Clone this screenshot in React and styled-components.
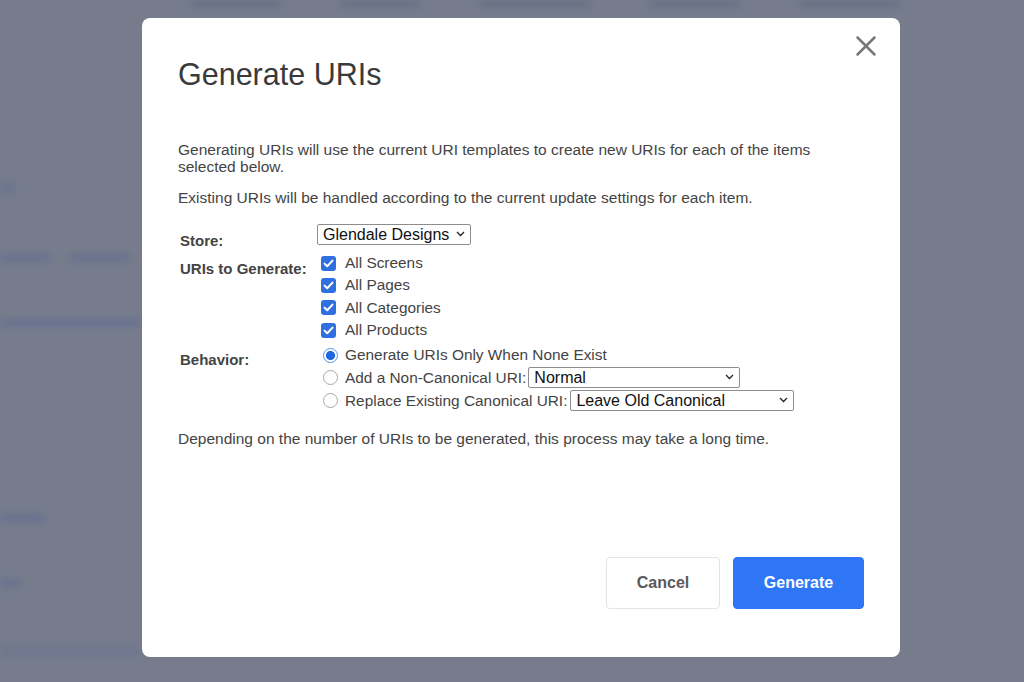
import React, { useState } from 'react';
import styled, { createGlobalStyle } from 'styled-components';

const GlobalStyle = createGlobalStyle`
  html, body {
    margin: 0;
    padding: 0;
    height: 100%;
    background: #767c8c;
    font-family: "Liberation Sans", Arial, sans-serif;
  }
  #root {
    height: 100%;
  }
`;

const Page = styled.div`
  position: relative;
  width: 100%;
  height: 100vh;
  overflow: hidden;
  background: #767c8c;
`;

const Ghost = styled.div`
  display: flex;
  flex-direction: column;
  filter: blur(3px);
`;

const GhostRow = styled.div`
  display: flex;
  gap: ${({ $gap }) => $gap || 20}px;
  margin-top: ${({ $mt }) => $mt || 0}px;
  padding-left: ${({ $pl }) => $pl || 0}px;
`;

const GhostBar = styled.span`
  display: block;
  height: 8px;
  width: ${({ $w }) => $w}px;
  border-radius: 4px;
  background: ${({ $c }) => $c || 'rgba(86, 100, 150, 0.4)'};
`;

const Overlay = styled.div`
  position: absolute;
  inset: 0;
  display: flex;
  align-items: flex-start;
  justify-content: flex-start;
  padding: 18px 0 0 142px;
`;

const Modal = styled.div`
  position: relative;
  box-sizing: border-box;
  width: 758px;
  height: 639px;
  background: #ffffff;
  border-radius: 8px;
  padding: 38px 36px 48px 36px;
  display: flex;
  flex-direction: column;
  color: #3d3d3d;
`;

const CloseButton = styled.button`
  position: absolute;
  top: 16px;
  right: 22px;
  width: 24px;
  height: 24px;
  padding: 0;
  border: none;
  background: none;
  cursor: pointer;
  display: flex;
  align-items: center;
  justify-content: center;
`;

const Title = styled.h1`
  margin: 0;
  font-size: 30.5px;
  line-height: 36px;
  font-weight: 400;
  color: #3a3a3c;
`;

const Body = styled.div`
  margin-top: 49px;
  flex: 1;
`;

const Para = styled.p`
  margin: ${({ $mt }) => $mt || 0}px 0 ${({ $mb }) => $mb ?? 14}px 0;
  max-width: 680px;
  font-size: 15.5px;
  line-height: 17px;
  color: #444;
`;

const FormGrid = styled.div`
  display: grid;
  grid-template-columns: 139px 1fr;
  margin-top: 18px;
`;

const FieldLabel = styled.div`
  padding-left: 2px;
  padding-top: ${({ $pt }) => $pt || 0}px;
  font-size: 15px;
  line-height: 17px;
  font-weight: 700;
  color: #444;
`;

const FieldValue = styled.div`
  display: flex;
  flex-direction: column;
  margin-top: ${({ $mt }) => $mt || 0}px;
`;

const OptionRow = styled.label`
  display: flex;
  align-items: center;
  height: ${({ $h }) => $h || 22.3}px;
  font-size: 15.4px;
  color: #444;
  cursor: pointer;
  white-space: nowrap;
`;

const CheckBox = styled.span`
  box-sizing: border-box;
  width: 15px;
  height: 15px;
  margin: 0 9px 0 4px;
  border-radius: 3px;
  background: ${({ $on }) => ($on ? '#2f6fe0' : '#fff')};
  border: ${({ $on }) => ($on ? 'none' : '1px solid #888')};
  display: flex;
  align-items: center;
  justify-content: center;
  flex-shrink: 0;
`;

const Radio = styled.span`
  box-sizing: border-box;
  width: 15px;
  height: 15px;
  margin: 0 7px 0 6px;
  border-radius: 50%;
  border: 1px solid ${({ $on }) => ($on ? '#5a8fe8' : '#a8a8a8')};
  background: ${({ $on }) =>
    $on ? 'radial-gradient(circle, #1f66e0 0 4.2px, #ffffff 4.8px)' : '#fff'};
  flex-shrink: 0;
`;

const SelectBox = styled.div`
  position: relative;
  box-sizing: border-box;
  width: ${({ $w }) => $w}px;
  height: 21px;
  margin-left: ${({ $ml }) => $ml || 0}px;
  border: 1px solid #8d8d8d;
  border-radius: 2px;
  background: #fff;
`;

const NativeSelect = styled.select`
  appearance: none;
  -webkit-appearance: none;
  width: 100%;
  height: 100%;
  border: none;
  outline: none;
  background: transparent;
  padding: 0 18px 0 5px;
  font-family: "Liberation Sans", Arial, sans-serif;
  font-size: 16px;
  line-height: 19px;
  color: #111;
`;

const Chevron = styled.svg`
  position: absolute;
  right: 5px;
  top: 6px;
  pointer-events: none;
`;

const Footer = styled.div`
  display: flex;
  justify-content: flex-end;
  gap: 13px;
`;

const Button = styled.button`
  box-sizing: border-box;
  height: 52px;
  width: ${({ $w }) => $w}px;
  border-radius: 4px;
  font-family: "Liberation Sans", Arial, sans-serif;
  font-size: 16px;
  font-weight: 700;
  cursor: pointer;
  border: 1px solid ${({ $primary }) => ($primary ? '#2f76f6' : '#e4e4e4')};
  background: ${({ $primary }) => ($primary ? '#2f76f6' : '#ffffff')};
  color: ${({ $primary }) => ($primary ? '#ffffff' : '#5a5a5a')};
`;

const Check = () => (
  <svg width="11" height="9" viewBox="0 0 11 9">
    <path d="M1.5 4.6 L4.2 7.2 L9.5 1.6" fill="none" stroke="#fff" strokeWidth="2" strokeLinecap="round" strokeLinejoin="round" />
  </svg>
);

const Select = ({ width, ml, value, options }) => (
  <SelectBox $w={width} $ml={ml}>
    <NativeSelect defaultValue={value}>
      {options.map(o => (
        <option key={o}>{o}</option>
      ))}
    </NativeSelect>
    <Chevron width="9" height="6" viewBox="0 0 9 6">
      <path d="M1 1 L4.5 4.5 L8 1" fill="none" stroke="#222" strokeWidth="1.3" />
    </Chevron>
  </SelectBox>
);

const types = ['All Screens', 'All Pages', 'All Categories', 'All Products'];

const Background = () => (
  <Ghost>
    <GhostRow $gap={60} $pl={190}>
      <GhostBar $w={90} $c="rgba(80,90,120,0.3)" />
      <GhostBar $w={80} $c="rgba(80,90,120,0.3)" />
      <GhostBar $w={110} $c="rgba(80,90,120,0.3)" />
      <GhostBar $w={90} $c="rgba(80,90,120,0.3)" />
      <GhostBar $w={100} $c="rgba(80,90,120,0.3)" />
    </GhostRow>
    <GhostRow $mt={176}>
      <GhostBar $w={14} />
    </GhostRow>
    <GhostRow $mt={62}>
      <GhostBar $w={50} />
      <GhostBar $w={60} />
    </GhostRow>
    <GhostRow $mt={57}>
      <GhostBar $w={140} />
    </GhostRow>
    <GhostRow $mt={187}>
      <GhostBar $w={44} />
    </GhostRow>
    <GhostRow $mt={57}>
      <GhostBar $w={20} />
    </GhostRow>
    <GhostRow $mt={60}>
      <GhostBar $w={140} $c="rgba(86,100,150,0.28)" />
    </GhostRow>
  </Ghost>
);

export default function App() {
  const [checked, setChecked] = useState(types.map(() => true));
  const [behavior, setBehavior] = useState(0);

  return (
    <Page>
      <GlobalStyle />
      <Background />
      <Overlay>
        <Modal>
          <CloseButton aria-label="Close">
            <svg width="22" height="22" viewBox="0 0 22 22">
              <path d="M2.5 2.5 L19.5 19.5 M19.5 2.5 L2.5 19.5" stroke="#777" strokeWidth="2.5" strokeLinecap="round" />
            </svg>
          </CloseButton>
          <Title>Generate URIs</Title>
          <Body>
            <Para>
              Generating URIs will use the current URI templates to create new URIs for each of the items selected below.
            </Para>
            <Para $mb={0}>
              Existing URIs will be handled according to the current update settings for each item.
            </Para>

            <FormGrid>
              <FieldLabel $pt={8}>Store:</FieldLabel>
              <FieldValue>
                <Select width={154} value="Glendale Designs" options={['Glendale Designs']} />
              </FieldValue>

              <FieldLabel $pt={11}>URIs to Generate:</FieldLabel>
              <FieldValue $mt={3}>
                {types.map((t, i) => (
                  <OptionRow
                    key={t}
                    onClick={() => setChecked(c => c.map((v, j) => (j === i ? !v : v)))}
                  >
                    <CheckBox $on={checked[i]}>{checked[i] && <Check />}</CheckBox>
                    {t}
                  </OptionRow>
                ))}
              </FieldValue>

              <FieldLabel $pt={10}>Behavior:</FieldLabel>
              <FieldValue $mt={3}>
                <OptionRow $h={22} onClick={() => setBehavior(0)}>
                  <Radio $on={behavior === 0} />
                  Generate URIs Only When None Exist
                </OptionRow>
                <OptionRow $h={23} onClick={() => setBehavior(1)}>
                  <Radio $on={behavior === 1} />
                  Add a Non-Canonical URI:
                  <Select width={212} ml={2} value="Normal" options={['Normal']} />
                </OptionRow>
                <OptionRow $h={23.5} onClick={() => setBehavior(2)}>
                  <Radio $on={behavior === 2} />
                  Replace Existing Canonical URI:
                  <Select width={224} ml={3} value="Leave Old Canonical" options={['Leave Old Canonical']} />
                </OptionRow>
              </FieldValue>
            </FormGrid>

            <Para $mt={17}>
              Depending on the number of URIs to be generated, this process may take a long time.
            </Para>
          </Body>
          <Footer>
            <Button $w={114}>Cancel</Button>
            <Button $w={131} $primary>Generate</Button>
          </Footer>
        </Modal>
      </Overlay>
    </Page>
  );
}
